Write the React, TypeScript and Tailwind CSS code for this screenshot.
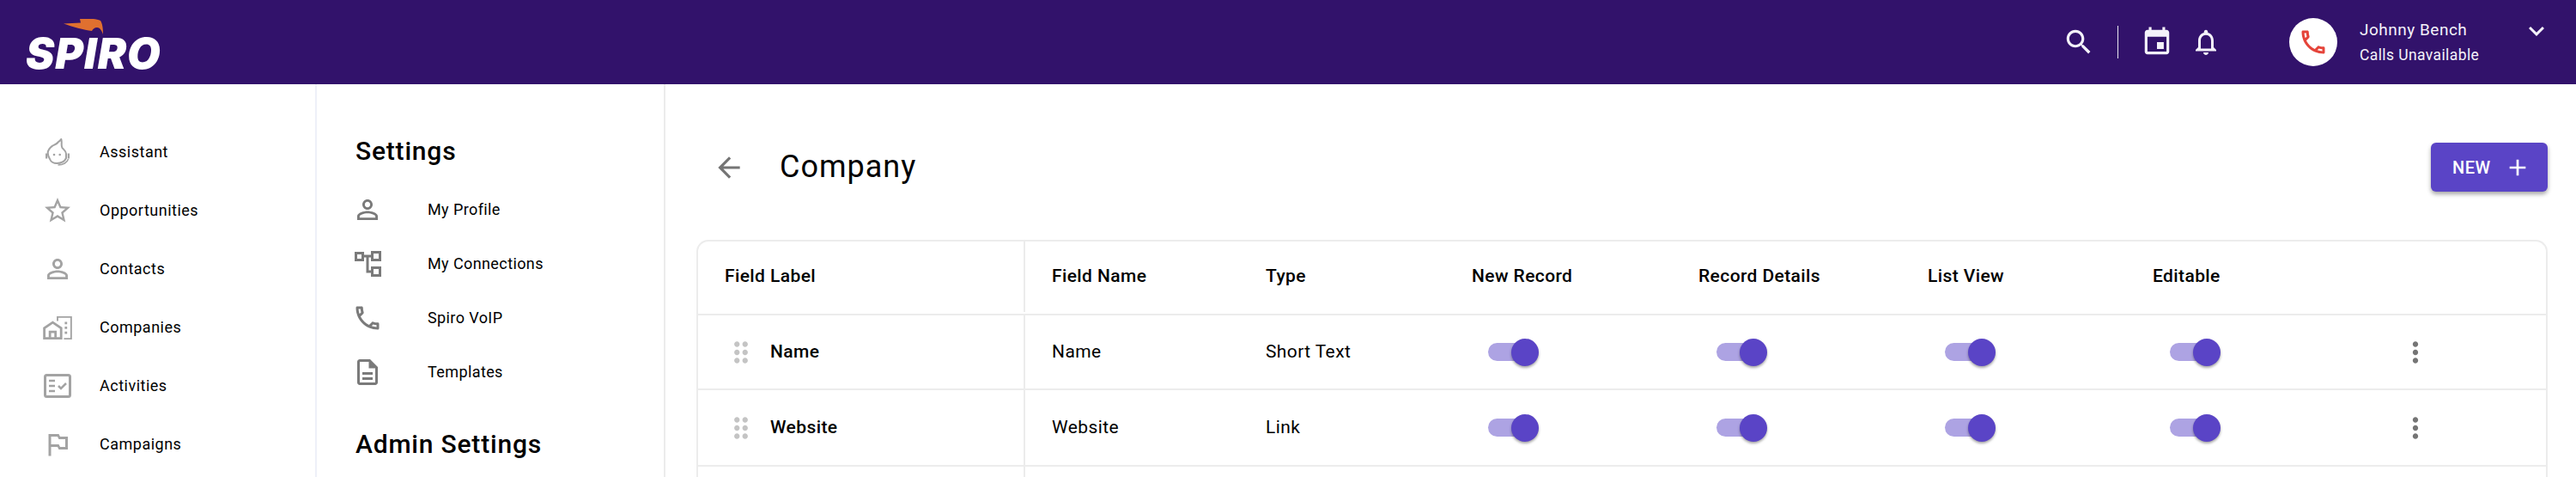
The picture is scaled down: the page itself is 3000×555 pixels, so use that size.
import type { ReactNode } from "react";

const P = {
  person:
    "M12 5.9c1.16 0 2.1.94 2.1 2.1s-.94 2.1-2.1 2.1S9.9 9.16 9.9 8s.94-2.1 2.1-2.1m0 9c2.97 0 6.1 1.46 6.1 2.1v1.1H5.9V17c0-.64 3.13-2.1 6.1-2.1M12 4C9.79 4 8 5.79 8 8s1.79 4 4 4 4-1.79 4-4-1.79-4-4-4zm0 9c-2.67 0-8 1.34-8 4v3h16v-3c0-2.66-5.33-4-8-4z",
  star: "M22 9.24l-7.19-.62L12 2 9.19 8.63 2 9.24l5.46 4.73L5.82 21 12 17.27 18.18 21l-1.63-7.03L22 9.24zM12 15.4l-3.76 2.27 1-4.28-3.32-2.88 4.38-.38L12 6.1l1.71 4.04 4.38.38-3.32 2.88 1 4.28L12 15.4z",
  flag: "M14 6l-1-2H5v17h2v-7h5l1 2h7V6h-6zm4 8h-4l-1-2H7V6h5l1 2h5v6z",
  phone:
    "M6.54 5c.06.89.21 1.76.45 2.59l-1.2 1.2c-.41-1.2-.67-2.47-.76-3.79h1.51m9.86 12.02c.85.24 1.72.39 2.6.45v1.49c-1.32-.09-2.59-.35-3.8-.75l1.2-1.19M7.5 3H4c-.55 0-1 .45-1 1 0 9.39 7.61 17 17 17 .55 0 1-.45 1-1v-3.49c0-.55-.45-1-1-1-1.24 0-2.45-.2-3.57-.57-.1-.04-.21-.05-.31-.05-.26 0-.51.1-.71.29l-2.2 2.2c-2.83-1.45-5.15-3.76-6.59-6.59l2.2-2.2c.28-.28.36-.67.25-1.02C8.7 6.45 8.5 5.25 8.5 4c0-.55-.45-1-1-1z",
  doc: "M8 16h8v2H8zm0-4h8v2H8zm6-10H6c-1.1 0-2 .9-2 2v16c0 1.1.89 2 1.99 2H18c1.1 0 2-.9 2-2V8l-6-6zm4 18H6V4h7v5h5v11z",
  search:
    "M15.5 14h-.79l-.28-.27C15.41 12.59 16 11.11 16 9.5 16 5.91 13.09 3 9.5 3S3 5.91 3 9.5 5.91 16 9.5 16c1.61 0 3.09-.59 4.23-1.57l.27.28v.79l5 4.99L20.49 19l-4.99-5zm-6 0C7.01 14 5 11.99 5 9.5S7.01 5 9.5 5 14 7.01 14 9.5 11.99 14 9.5 14z",
  event:
    "M17 12h-5v5h5v-5zM16 1v2H8V1H6v2H5c-1.11 0-1.99.9-1.99 2L3 19c0 1.1.89 2 2 2h14c1.1 0 2-.9 2-2V5c0-1.1-.9-2-2-2h-1V1h-2zm3 18H5V8h14v11z",
  bell: "M12 22c1.1 0 2-.9 2-2h-4c0 1.1.9 2 2 2zm6-6v-5c0-3.07-1.63-5.64-4.5-6.32V4c0-.83-.67-1.5-1.5-1.5s-1.5.67-1.5 1.5v.68C7.64 5.36 6 7.92 6 11v5l-2 2v1h16v-1l-2-2zm-2 1H8v-6c0-2.48 1.51-4.5 4-4.5s4 2.02 4 4.5v6z",
  more: "M12 8c1.1 0 2-.9 2-2s-.9-2-2-2-2 .9-2 2 .9 2 2 2zm0 2c-1.1 0-2 .9-2 2s.9 2 2 2 2-.9 2-2-.9-2-2-2zm0 6c-1.1 0-2 .9-2 2s.9 2 2 2 2-.9 2-2-.9-2-2-2z",
  drag: "M11 18c0 1.1-.9 2-2 2s-2-.9-2-2 .9-2 2-2 2 .9 2 2zm-2-8c-1.1 0-2 .9-2 2s.9 2 2 2 2-.9 2-2-.9-2-2-2zm0-6c-1.1 0-2 .9-2 2s.9 2 2 2 2-.9 2-2-.9-2-2-2zm6 4c1.1 0 2-.9 2-2s-.9-2-2-2-2 .9-2 2 .9 2 2 2zm0 2c-1.1 0-2 .9-2 2s.9 2 2 2 2-.9 2-2-.9-2-2-2zm0 6c-1.1 0-2 .9-2 2s.9 2 2 2 2-.9 2-2-.9-2-2-2z",
  back: "M20 11H7.83l5.59-5.59L12 4l-8 8 8 8 1.41-1.41L7.83 13H20v-2z",
  down: "M7.41 8.59L12 13.17l4.59-4.58L18 10l-6 6-6-6 1.41-1.41z",
  add: "M19 13h-6v6h-2v-6H5v-2h6V5h2v6h6v2z",
};

function Icon({ d, className }: { d: string; className: string }) {
  return (
    <svg viewBox="0 0 24 24" fill="currentColor" className={className}>
      <path d={d} />
    </svg>
  );
}

// Spiro's own nav glyphs, no package has these
function AssistantIcon() {
  return (
    <svg viewBox="0 0 28 32" className="h-[32px] w-[28px] text-[#a3a3a3]" fill="none" stroke="currentColor" strokeWidth="2">
      <path d="M18.3 1c1.2 3.5-.4 6.5 1 9.7 1.5 2.4 4.7 3.6 4.7 7.3v5c-1.5 3.6-6 6-11 6-3.5 0-7-2-8-5-1.5-2.500-2.300-4.500-2.300-7 0-4.500 3-6.500 5.600-8.500 2.700-1.300 5.700-2.300 6.700-4.500 1.300-1 2.700-1.700 3.300-3z" />
      <path d="M1 17.500v6M27 17.500v6" strokeWidth="2.500" />
      <path d="M26.500 24c-1 4-6 7-12 7" strokeWidth="1.500" />
      <circle cx="10" cy="19" r="1.300" fill="currentColor" stroke="none" />
      <circle cx="16.700" cy="19" r="1.300" fill="currentColor" stroke="none" />
    </svg>
  );
}

function CompanyIcon() {
  return (
    <svg viewBox="0 0 36 30" className="h-[28px] w-[34px] text-[#a3a3a3]" fill="currentColor">
      <path d="M17 1h19v29H26v-2h8V3H19v4h-2z" />
      <path d="M12 7l12 8v15H0V15zM3 16.500V27h4v-8h10v8h4V16.500l-9-6zM10 22v5h4v-5z" />
      <path d="M27 8h3v3h-3zM27 14h3v3h-3zM27 20h3v3h-3z" />
    </svg>
  );
}

function ActivityIcon() {
  return (
    <svg viewBox="0 0 32 28" className="h-[28px] w-[32px] text-[#a3a3a3]" fill="none" stroke="currentColor">
      <rect x="1.500" y="1.500" width="29" height="25" rx="2" strokeWidth="3" />
      <path d="M6 8h7M6 14h7M6 20h7" strokeWidth="2.500" />
      <path d="M17 14l3 3 6-6" strokeWidth="2.500" />
    </svg>
  );
}

function ConnectionsIcon() {
  return (
    <svg viewBox="0 0 31 30" className="h-[30px] w-[31px] text-[#7a7a7a]" fill="none" stroke="currentColor" strokeWidth="3">
      <rect x="1.500" y="2.500" width="8" height="8" />
      <rect x="20.500" y="1.500" width="9" height="9" />
      <rect x="20.500" y="19.500" width="9" height="9" />
      <path d="M10 6h10M15 6v18h5" />
    </svg>
  );
}

function Logo() {
  return (
    <div className="relative ml-[30px] mt-[2px] h-[56px] w-[160px]">
      <svg viewBox="0 0 46 19" className="absolute left-[44px] top-0 h-[19px] w-[46px] text-[#e0702f]" fill="currentColor">
        <path d="M0 5.500 20 4.500 19 0c9 0 18-1 24 2 2 3 3 8 3 16-1-3-3-8-7-8-3 0-5 2-6 4C24 13 10 9 0 5.500z" />
      </svg>
      <span className="absolute bottom-[-9px] left-0 font-['Inter'] text-[50px] font-black italic leading-none tracking-[1px] text-white">
        SPIRO
      </span>
    </div>
  );
}

function Header() {
  return (
    <header className="flex h-[98px] shrink-0 items-center bg-[#32126b]">
      <Logo />
      <div className="ml-auto flex items-center text-[#f4f2fa]">
        <Icon d={P.search} className="h-[38px] w-[38px]" />
        <div className="ml-[26px] mr-[26px] h-[38px] w-[1.5px] bg-white/90" />
        <Icon d={P.event} className="h-[38px] w-[38px]" />
        <Icon d={P.bell} className="ml-[20px] h-9 w-9" />
        <div className="ml-[79px] flex h-[56px] w-[56px] items-center justify-center rounded-full bg-white">
          <Icon d={P.phone} className="h-9 w-9 text-[#e5443a]" />
        </div>
        <div className="ml-[26px] w-[188px] pb-[1px]">
          <p className="text-[19px] leading-[30px] tracking-[0.5px]">Johnny Bench</p>
          <p className="text-[17.5px] leading-[28px] tracking-[0.4px]">Calls Unavailable</p>
        </div>
        <Icon d={P.down} className="mb-[26px] mr-[28px] h-9 w-9" />
      </div>
    </header>
  );
}

function NavRow({ icon, label }: { icon: ReactNode; label: string }) {
  return (
    <li className="flex h-[68px] items-center">
      <span className="flex w-[36px] items-center justify-center">{icon}</span>
      <span className="ml-[31px] mb-[1px] text-[18px] tracking-[0.5px]">{label}</span>
    </li>
  );
}

function MainNav() {
  const grey = "h-9 w-9 text-[#a3a3a3]";
  return (
    <nav className="w-[369px] shrink-0 border-r-2 border-[#eef0f8] pl-[49px] pt-[45px]">
      <ul>
        <NavRow icon={<AssistantIcon />} label="Assistant" />
        <NavRow icon={<Icon d={P.star} className={grey} />} label="Opportunities" />
        <NavRow icon={<Icon d={P.person} className={grey} />} label="Contacts" />
        <NavRow icon={<CompanyIcon />} label="Companies" />
        <NavRow icon={<ActivityIcon />} label="Activities" />
        <NavRow icon={<Icon d={P.flag} className={grey} />} label="Campaigns" />
      </ul>
    </nav>
  );
}

function SettingsRow({ icon, label }: { icon: ReactNode; label: string }) {
  return (
    <li className="flex h-[63px] items-center">
      <span className="flex w-[36px] items-center justify-center">{icon}</span>
      <span className="ml-[52px] text-[18px] tracking-[0.4px]">{label}</span>
    </li>
  );
}

function SettingsNav() {
  const grey = "h-9 w-9 text-[#7a7a7a]";
  return (
    <aside className="w-[406px] shrink-0 border-r-2 border-[#ececec] pl-[41px] pt-[58px]">
      <h2 className="pl-[4px] text-[30px] font-medium leading-[40px] tracking-[0.8px]">Settings</h2>
      <ul className="mt-[16px]">
        <SettingsRow icon={<Icon d={P.person} className={grey} />} label="My Profile" />
        <SettingsRow icon={<ConnectionsIcon />} label="My Connections" />
        <SettingsRow icon={<Icon d={P.phone} className={grey} />} label="Spiro VoIP" />
        <SettingsRow icon={<Icon d={P.doc} className={grey} />} label="Templates" />
      </ul>
      <h2 className="mt-[33px] pl-[4px] text-[30px] font-medium leading-[40px] tracking-[0.8px]">Admin Settings</h2>
    </aside>
  );
}

function Toggle({ offset }: { offset: string }) {
  return (
    <div className={`relative h-[21px] w-[47px] rounded-full bg-[#ada3e3] ${offset}`}>
      <div className="absolute left-[27px] top-[-5.5px] h-[32px] w-[32px] rounded-full bg-[#5a44c6] shadow-[0_2px_3px_rgba(0,0,0,0.35)]" />
    </div>
  );
}

const cols = "grid grid-cols-[381px_280px_240px_264px_267px_262px_304px_1fr]";

function Row({ name, type, height }: { name: string; type: string; height: string }) {
  return (
    <div className={`${cols} ${height} items-center border-b-2 border-[#ececec] text-[21px] tracking-[0.4px]`}>
      <div className="flex h-full items-center border-r-2 border-[#ececec] pl-[31px]">
        <Icon d={P.drag} className="h-[38px] w-[38px] text-[#c4c4c4]" />
        <span className="ml-[15px] font-medium">{name}</span>
      </div>
      <span className="pl-[31px]">{name}</span>
      <span>{type}</span>
      <Toggle offset="ml-[19px]" />
      <Toggle offset="ml-[21px]" />
      <Toggle offset="ml-[20px]" />
      <Toggle offset="ml-[20px]" />
      <Icon d={P.more} className="ml-[-17px] h-[38px] w-[38px] text-[#757575]" />
    </div>
  );
}

function FieldTable() {
  const heads = ["Field Name", "Type", "New Record", "Record Details", "List View", "Editable"];
  return (
    <div className="mt-[56px] rounded-t-[14px] border-x-2 border-t-2 border-[#ececec]">
      <div className={`${cols} h-[86px] items-center border-b-2 border-[#ececec] pb-[2px] text-[21px] font-medium tracking-[0.4px]`}>
        <div className="flex h-full items-center border-r-2 border-[#ececec] pl-[31px]">Field Label</div>
        {heads.map((h, i) => (
          <span key={h} className={i === 0 ? "pl-[31px]" : ""}>
            {h}
          </span>
        ))}
      </div>
      <Row name="Name" type="Short Text" height="h-[87px]" />
      <Row name="Website" type="Link" height="h-[89px]" />
      <div className={cols}>
        <div className="h-[40px] border-r-2 border-[#ececec]" />
      </div>
    </div>
  );
}

export default function App() {
  return (
    <div className="flex h-[555px] w-[3000px] flex-col overflow-hidden bg-white font-['Roboto',sans-serif] text-black">
      <Header />
      <div className="flex min-h-0 flex-1">
        <MainNav />
        <SettingsNav />
        <main className="min-w-0 flex-1 pl-[36px] pr-[33px] pt-[68px]">
          <div className="flex h-[57px] items-center">
            <Icon d={P.back} className="ml-[19px] h-[38px] w-[38px] text-[#757575]" />
            <h1 className="mb-[2px] ml-[40px] text-[36px] leading-none tracking-[1px]">Company</h1>
            <button
              type="button"
              className="ml-auto flex h-[57px] w-[136px] items-center gap-[15px] rounded-[6px] bg-[#5a44c6] pl-[25px] text-[20px] font-medium tracking-[0.5px] text-white shadow-[0_3px_5px_rgba(0,0,0,0.35)]"
            >
              NEW
              <Icon d={P.add} className="h-8 w-8" />
            </button>
          </div>
          <FieldTable />
        </main>
      </div>
    </div>
  );
}
